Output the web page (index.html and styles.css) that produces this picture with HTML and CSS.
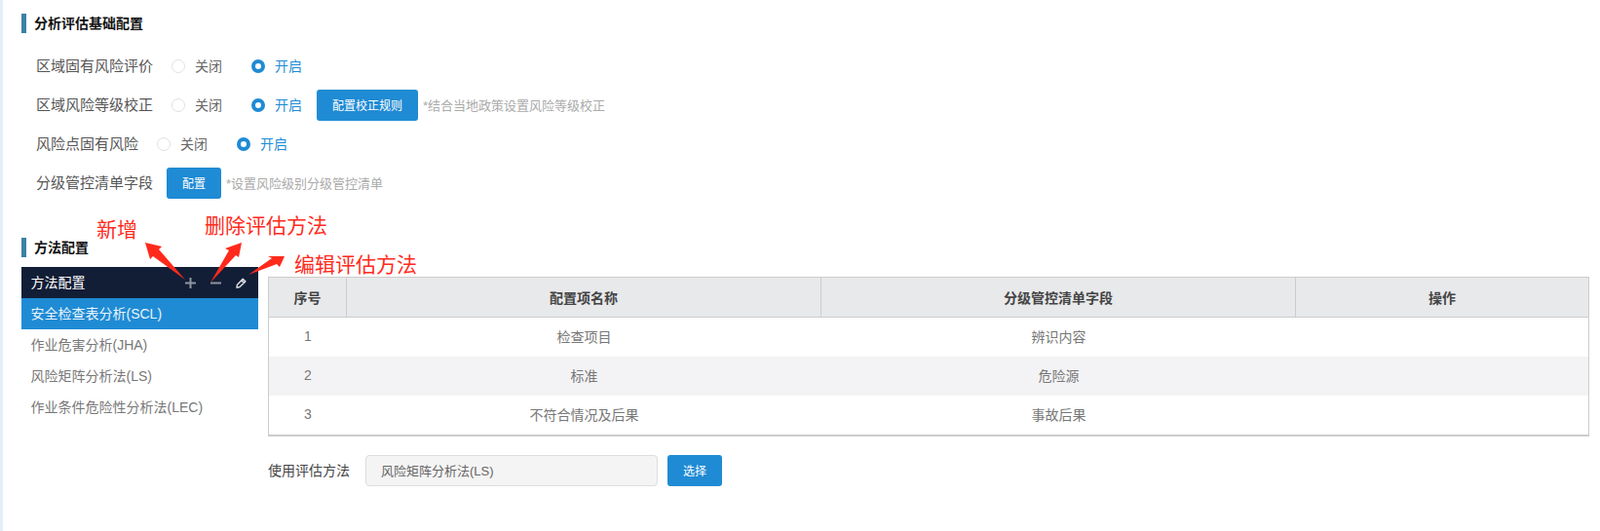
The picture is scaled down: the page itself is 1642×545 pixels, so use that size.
FILE: index.html
```html
<!DOCTYPE html>
<html lang="zh-CN">
<head>
<meta charset="utf-8">
<title>分析评估基础配置</title>
<link rel="stylesheet" href="styles.css">
</head>
<body>
<main class="page">
  <h2 class="section-title">分析评估基础配置</h2>
  <div class="form">
    <div class="form-row">
      <span class="form-label">区域固有风险评价</span>
      <span class="radio-group">
        <span class="radio"></span><span class="radio-text">关闭</span>
        <span class="radio radio-on"></span><span class="radio-text radio-text-on">开启</span>
      </span>
    </div>
    <div class="form-row">
      <span class="form-label">区域风险等级校正</span>
      <span class="radio-group">
        <span class="radio"></span><span class="radio-text">关闭</span>
        <span class="radio radio-on"></span><span class="radio-text radio-text-on">开启</span>
      </span>
      <button class="btn btn-wide">配置校正规则</button>
      <span class="hint">*结合当地政策设置风险等级校正</span>
    </div>
    <div class="form-row">
      <span class="form-label">风险点固有风险</span>
      <span class="radio-group">
        <span class="radio"></span><span class="radio-text">关闭</span>
        <span class="radio radio-on"></span><span class="radio-text radio-text-on">开启</span>
      </span>
    </div>
    <div class="form-row">
      <span class="form-label label-tight">分级管控清单字段</span>
      <button class="btn">配置</button>
      <span class="hint">*设置风险级别分级管控清单</span>
    </div>
  </div>

  <h2 class="section-title section-title-second">方法配置</h2>
  <div class="methods">
    <aside class="side">
      <div class="side-head">
        <span class="side-title">方法配置</span>
        <span class="side-tools">
          <svg class="tool" viewBox="0 0 11 11"><path d="M5.5 0v11M0 5.5h11" stroke="#8f959f" stroke-width="2" fill="none"/></svg>
          <svg class="tool" viewBox="0 0 11 11"><path d="M0 5.5h11" stroke="#8f959f" stroke-width="2" fill="none"/></svg>
          <svg class="tool" viewBox="0 0 11 11"><path d="M1 10.2l.5-3L7.2 1.4l2.6 2.5-5.8 5.6zM5.8 2.9l2.6 2.5" stroke="#d5d8dc" stroke-width="1.5" fill="none" stroke-linejoin="round"/></svg>
        </span>
      </div>
      <ul class="side-list">
        <li class="side-item side-item-active">安全检查表分析(SCL)</li>
        <li class="side-item">作业危害分析(JHA)</li>
        <li class="side-item">风险矩阵分析法(LS)</li>
        <li class="side-item">作业条件危险性分析法(LEC)</li>
      </ul>
    </aside>
    <section class="detail">
      <table class="grid">
        <thead>
          <tr>
            <th class="col-no">序号</th>
            <th class="col-wide">配置项名称</th>
            <th class="col-wide">分级管控清单字段</th>
            <th>操作</th>
          </tr>
        </thead>
        <tbody>
          <tr><td>1</td><td>检查项目</td><td>辨识内容</td><td></td></tr>
          <tr><td>2</td><td>标准</td><td>危险源</td><td></td></tr>
          <tr><td>3</td><td>不符合情况及后果</td><td>事故后果</td><td></td></tr>
        </tbody>
      </table>
      <div class="use-row">
        <span class="use-label">使用评估方法</span>
        <input class="use-input" type="text" value="风险矩阵分析法(LS)" readonly>
        <button class="btn">选择</button>
      </div>
    </section>
  </div>
</main>

<div class="note note-add">新增</div>
<div class="note note-del">删除评估方法</div>
<div class="note note-edit">编辑评估方法</div>
<svg class="arrows" viewBox="0 0 1642 545">
  <path fill="#ff2a1c" d="M149 249L166 253L163 256L190 287L157 263L154 266Z"/>
  <path fill="#ff2a1c" d="M248 249L245 264L242 262L216 290L235 257L231 255Z"/>
  <path fill="#ff2a1c" d="M292 263L287 274L284 271L255 282L279 265L275 263Z"/>
</svg>
</body>
</html>
```

FILE: styles.css
```css
* {
  box-sizing: border-box;
}

html,
body {
  margin: 0;
  padding: 0;
  background: #fff;
}

body {
  position: relative;
  height: 545px;
  overflow: hidden;
  font-family: "Liberation Sans", "Noto Sans CJK SC", sans-serif;
  font-size: 14px;
  color: #666;
}

.page {
  height: 545px;
  padding: 14px 11px 0 19px;
  border-left: 3px solid #e3eefa;
}

.section-title {
  margin: 0;
  height: 20px;
  line-height: 20px;
  padding-left: 8px;
  border-left: 5px solid #3a82a4;
  font-size: 14px;
  font-weight: 700;
  color: #111;
}

.section-title-second {
  margin-top: 36px;
}

.form {
  margin-top: 14px;
  padding-left: 15px;
}

.form-row {
  display: flex;
  align-items: center;
  height: 40px;
}

.form-label {
  padding-bottom: 3px;
  font-size: 15px;
  color: #555;
  margin-right: 19px;
}

.label-tight {
  margin-right: 14px;
}

.radio-group {
  display: flex;
  align-items: center;
}

.radio {
  width: 14px;
  height: 14px;
  border: 1px solid #dfe1e8;
  border-radius: 50%;
  background: #fff;
  margin-right: 10px;
}

.radio-on {
  border: 4.5px solid #1f8bd4;
}

.radio-text {
  width: 28px;
  padding-bottom: 3px;
  margin-right: 30px;
  color: #666;
  white-space: nowrap;
}

.radio-text-on {
  margin-right: 15px;
  color: #1f8bd4;
}

.btn {
  width: 56px;
  height: 32px;
  padding: 0 0 2px;
  border: 0;
  border-radius: 3px;
  background: #1f8bd4;
  color: #fff;
  font-family: inherit;
  font-size: 12px;
}

.btn-wide {
  width: 104px;
}

.hint {
  margin-left: 5px;
  padding-bottom: 2px;
  font-size: 13px;
  color: #aaa;
}

.methods {
  display: flex;
  align-items: flex-start;
  gap: 10px;
  margin-top: 10px;
}

.side {
  flex: 0 0 243px;
}

.side-head {
  display: flex;
  align-items: center;
  justify-content: space-between;
  height: 32px;
  padding: 0 12px 0 9.5px;
  background: #121e36;
  color: #fff;
}

.side-title {
  padding-bottom: 2px;
}

.side-tools {
  display: flex;
  align-items: center;
  gap: 15px;
}

.tool {
  display: block;
  width: 11px;
  height: 11px;
}

.side-list {
  list-style: none;
  margin: 0;
  padding: 0;
}

.side-item {
  height: 32px;
  line-height: 32px;
  padding-left: 9.5px;
  color: #777;
}

.side-item-active {
  background: #1f8bd4;
  color: #e8f4fc;
}

.detail {
  flex: 1;
  padding-top: 10px;
}

.grid {
  width: 100%;
  table-layout: fixed;
  border-collapse: separate;
  border-spacing: 0;
  border: 1px solid #ccc;
  border-bottom-width: 2px;
  text-align: center;
}

.grid th {
  height: 41px;
  padding: 0;
  background: #e8e9eb;
  border-right: 1px solid #ccc;
  border-bottom: 1px solid #ccc;
  font-size: 14px;
  font-weight: 700;
  color: #444;
}

.grid th:last-child {
  border-right: 0;
}

.col-no {
  width: 80px;
}

.col-wide {
  width: 487px;
}

.grid td {
  height: 40px;
  padding: 0 0 3px;
  font-size: 14px;
  color: #777;
}

.grid tbody tr:nth-child(even) td {
  background: #f3f3f5;
}

.use-row {
  display: flex;
  align-items: center;
  margin-top: 19px;
}

.use-label {
  width: 84px;
  margin-right: 16px;
  padding-bottom: 3px;
  font-size: 14px;
  color: #444;
  white-space: nowrap;
}

.use-input {
  width: 300px;
  height: 32px;
  margin-right: 10px;
  padding: 0 14px 2px 15px;
  border: 1px solid #ddd;
  border-radius: 4px;
  background: #f4f4f4;
  font-family: inherit;
  font-size: 13px;
  color: #666;
  outline: 0;
}

.note {
  position: absolute;
  font-size: 21px;
  line-height: 28px;
  white-space: nowrap;
  color: #ff2a1c;
}

.note-add {
  left: 99px;
  top: 222px;
}

.note-del {
  left: 210px;
  top: 218px;
}

.note-edit {
  left: 302px;
  top: 258px;
}

.arrows {
  position: absolute;
  left: 0;
  top: 0;
  width: 1642px;
  height: 545px;
  pointer-events: none;
}
```
